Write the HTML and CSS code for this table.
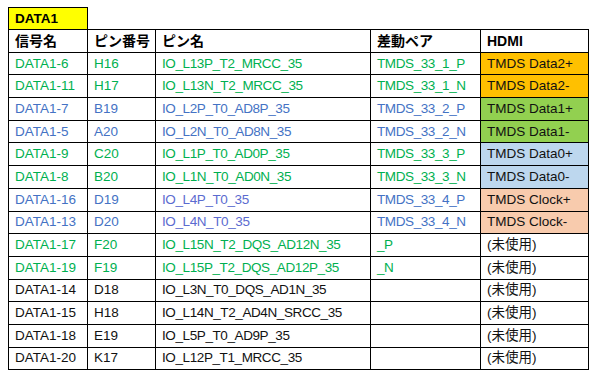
FILE: index.html
```html
<!DOCTYPE html>
<html lang="ja">
<head>
<meta charset="utf-8">
<link rel="stylesheet" href="styles.css">
</head>
<body>
<table class="pins">
  <colgroup>
    <col class="c1"><col class="c2"><col class="c3"><col class="c4"><col class="c5">
  </colgroup>
  <tr class="title-row">
    <td class="title">DATA1</td><td class="blank"></td><td class="blank"></td><td class="blank"></td><td class="blank"></td>
  </tr>
  <tr class="head">
    <td>信号名</td><td>ピン番号</td><td>ピン名</td><td>差動ペア</td><td>HDMI</td>
  </tr>
  <tr class="g"><td>DATA1-6</td><td>H16</td><td class="n">IO_L13P_T2_MRCC_35</td><td class="n">TMDS_33_1_P</td><td class="orange">TMDS Data2+</td></tr>
  <tr class="g"><td>DATA1-11</td><td>H17</td><td class="n">IO_L13N_T2_MRCC_35</td><td class="n">TMDS_33_1_N</td><td class="orange">TMDS Data2-</td></tr>
  <tr class="b"><td>DATA1-7</td><td>B19</td><td class="n">IO_L2P_T0_AD8P_35</td><td class="n">TMDS_33_2_P</td><td class="lime">TMDS Data1+</td></tr>
  <tr class="b"><td>DATA1-5</td><td>A20</td><td class="n">IO_L2N_T0_AD8N_35</td><td class="n">TMDS_33_2_N</td><td class="lime">TMDS Data1-</td></tr>
  <tr class="g"><td>DATA1-9</td><td>C20</td><td class="n">IO_L1P_T0_AD0P_35</td><td class="n">TMDS_33_3_P</td><td class="sky">TMDS Data0+</td></tr>
  <tr class="g"><td>DATA1-8</td><td>B20</td><td class="n">IO_L1N_T0_AD0N_35</td><td class="n">TMDS_33_3_N</td><td class="sky">TMDS Data0-</td></tr>
  <tr class="b"><td>DATA1-16</td><td>D19</td><td class="n v">IO_L4P_T0_35</td><td class="n">TMDS_33_4_P</td><td class="peach">TMDS Clock+</td></tr>
  <tr class="b"><td>DATA1-13</td><td>D20</td><td class="n v">IO_L4N_T0_35</td><td class="n">TMDS_33_4_N</td><td class="peach">TMDS Clock-</td></tr>
  <tr class="g"><td>DATA1-17</td><td>F20</td><td class="n">IO_L15N_T2_DQS_AD12N_35</td><td class="n">_P</td><td class="k">(未使用)</td></tr>
  <tr class="g"><td>DATA1-19</td><td>F19</td><td class="n">IO_L15P_T2_DQS_AD12P_35</td><td class="n">_N</td><td class="k">(未使用)</td></tr>
  <tr class="k"><td>DATA1-14</td><td>D18</td><td class="n">IO_L3N_T0_DQS_AD1N_35</td><td></td><td>(未使用)</td></tr>
  <tr class="k"><td>DATA1-15</td><td>H18</td><td class="n">IO_L14N_T2_AD4N_SRCC_35</td><td></td><td>(未使用)</td></tr>
  <tr class="k"><td>DATA1-18</td><td>E19</td><td class="n">IO_L5P_T0_AD9P_35</td><td></td><td>(未使用)</td></tr>
  <tr class="k"><td>DATA1-20</td><td>K17</td><td class="n">IO_L12P_T1_MRCC_35</td><td></td><td>(未使用)</td></tr>
</table>
</body>
</html>
```

FILE: styles.css
```css
html, body {
  margin: 0;
  padding: 0;
  background: #ffffff;
}
body {
  padding: 7px 0 0 8px;
  font-family: "Liberation Sans", "Noto Sans CJK JP", sans-serif;
  font-size: 13.5px;
  color: #111111;
}
.pins {
  border-collapse: collapse;
  table-layout: fixed;
  width: 581px;
}
.c1 { width: 79px; }
.c2 { width: 68px; }
.c3 { width: 215px; }
.c4 { width: 110px; }
.c5 { width: 108px; }
.pins td {
  border: 1px solid #000000;
  padding: 0 0 0 6px;
  height: 21.7px;
  line-height: 16px;
  white-space: nowrap;
  overflow: hidden;
  vertical-align: middle;
}
.pins td.n { letter-spacing: -0.4px; }
.pins .title-row td { height: 21px; }
.pins td.title {
  background: #ffff00;
  font-weight: bold;
  color: #000000;
}
.pins td.blank {
  border-top: none;
  border-left: none;
  border-right: none;
}
.head td {
  font-weight: bold;
  color: #000000;
  font-size: 14px;
}
.g td { color: #00b050; }
.b td { color: #4472c4; }
.b td.v { color: #5b6bd0; }
.k td, .pins td.k { color: #111111; }
.pins td.orange { background: #ffc000; color: #111111; }
.pins td.lime { background: #92d050; color: #111111; }
.pins td.sky { background: #bdd7ee; color: #111111; }
.pins td.peach { background: #f8cbad; color: #111111; }
```
